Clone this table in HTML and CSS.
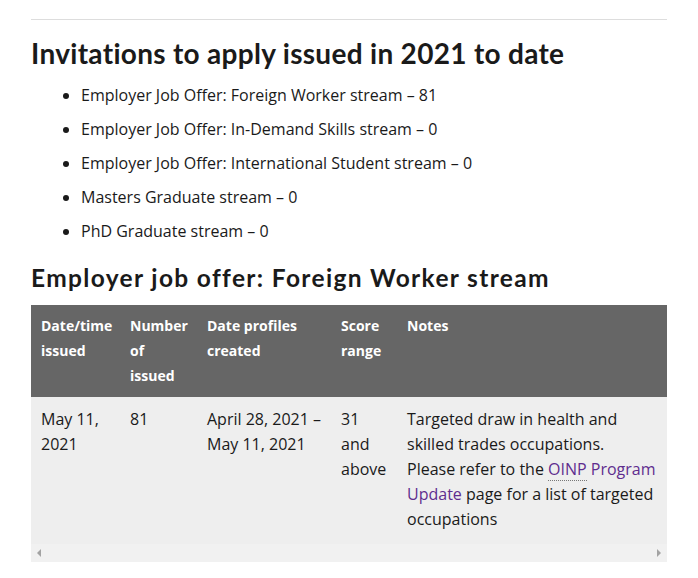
FILE: index.html
```html
<!DOCTYPE html>
<html lang="en">
<head>
<meta charset="utf-8">
<title>Invitations to apply</title>
<link rel="stylesheet" href="styles.css">
</head>
<body>
<main class="page">
  <hr class="rule">
  <h1 class="h1">Invitations to apply issued in 2021 to date</h1>
  <ul class="list">
    <li>Employer Job Offer: Foreign Worker stream – 81</li>
    <li>Employer Job Offer: In-Demand Skills stream – 0</li>
    <li>Employer Job Offer: International Student stream – 0</li>
    <li>Masters Graduate stream – 0</li>
    <li>PhD Graduate stream – 0</li>
  </ul>
  <h2 class="h2">Employer job offer: Foreign Worker stream</h2>
  <div class="table-wrap">
    <table class="draws">
      <colgroup>
        <col class="c1"><col class="c2"><col class="c3"><col class="c4"><col class="c5">
      </colgroup>
      <thead>
        <tr>
          <th>Date/time issued</th>
          <th>Number of issued</th>
          <th>Date profiles created</th>
          <th>Score range</th>
          <th class="last">Notes</th>
        </tr>
      </thead>
      <tbody>
        <tr>
          <td>May 11, 2021</td>
          <td>81</td>
          <td>April 28, 2021 – May 11, 2021</td>
          <td>31 and above</td>
          <td class="last">Targeted draw in health and skilled trades occupations.<br>Please refer to the <a class="link" href="#"><abbr class="abbr" title="Ontario Immigrant Nominee Program">OINP</abbr> Program Update</a> page for a list of targeted occupations</td>
        </tr>
      </tbody>
    </table>
    <div class="scrollbar">
      <span class="arrow arrow-left"></span>
      <span class="arrow arrow-right"></span>
    </div>
  </div>
</main>
</body>
</html>
```
FILE: styles.css
```css
html, body {
  margin: 0;
  padding: 0;
  background: #fff;
}
.page {
  width: 636px;
  margin-left: 31px;
  padding-top: 19px;
  font-family: "Open Sans", "Liberation Sans", sans-serif;
  color: #1a1a1a;
}
.rule {
  margin: 0;
  border: 0;
  border-top: 1px solid #ddd;
  height: 0;
}
.h1 {
  margin: 16px 0 0;
  font-family: Lato, "Open Sans", sans-serif;
  font-weight: 700;
  font-size: 28px;
  line-height: 34px;
  letter-spacing: 0.3px;
  color: #1a1a1a;
}
.list {
  margin: 13px 0 0;
  padding-left: 50px;
  font-size: 16px;
  line-height: 24px;
}
.list li {
  margin-bottom: 10px;
}
.h2 {
  margin: 20px 0 0;
  font-family: Lato, "Open Sans", sans-serif;
  font-weight: 700;
  font-size: 24.5px;
  line-height: 30px;
  letter-spacing: 1.35px;
  color: #1a1a1a;
}
.table-wrap {
  margin-top: 12px;
}
.draws {
  width: 636px;
  border-collapse: collapse;
  table-layout: fixed;
}
.c1 { width: 89px; }
.c2 { width: 77px; }
.c3 { width: 134px; }
.c4 { width: 66px; }
.c5 { width: 270px; }
.draws th {
  background: #666;
  color: #fff;
  font-weight: 700;
  font-size: 14px;
  line-height: 25px;
  text-align: left;
  vertical-align: top;
  padding: 8px 6px 9px 10px;
}
.draws td {
  background: #eee;
  font-size: 16px;
  line-height: 25px;
  vertical-align: top;
  padding: 10px 6px 12px 10px;
}
.draws .last {
  padding-right: 6px;
}
.link {
  color: #5f2d8e;
  text-decoration: none;
}
.abbr {
  text-decoration: none;
  border-bottom: 1px dotted #777;
}
.scrollbar {
  height: 18px;
  background: #f1f1f1;
  display: flex;
  align-items: center;
  justify-content: space-between;
  padding: 0 6px;
}
.arrow {
  width: 0;
  height: 0;
  border-top: 4px solid transparent;
  border-bottom: 4px solid transparent;
}
.arrow-left {
  border-right: 4px solid #a3a3a3;
}
.arrow-right {
  border-left: 4px solid #a3a3a3;
}
```
